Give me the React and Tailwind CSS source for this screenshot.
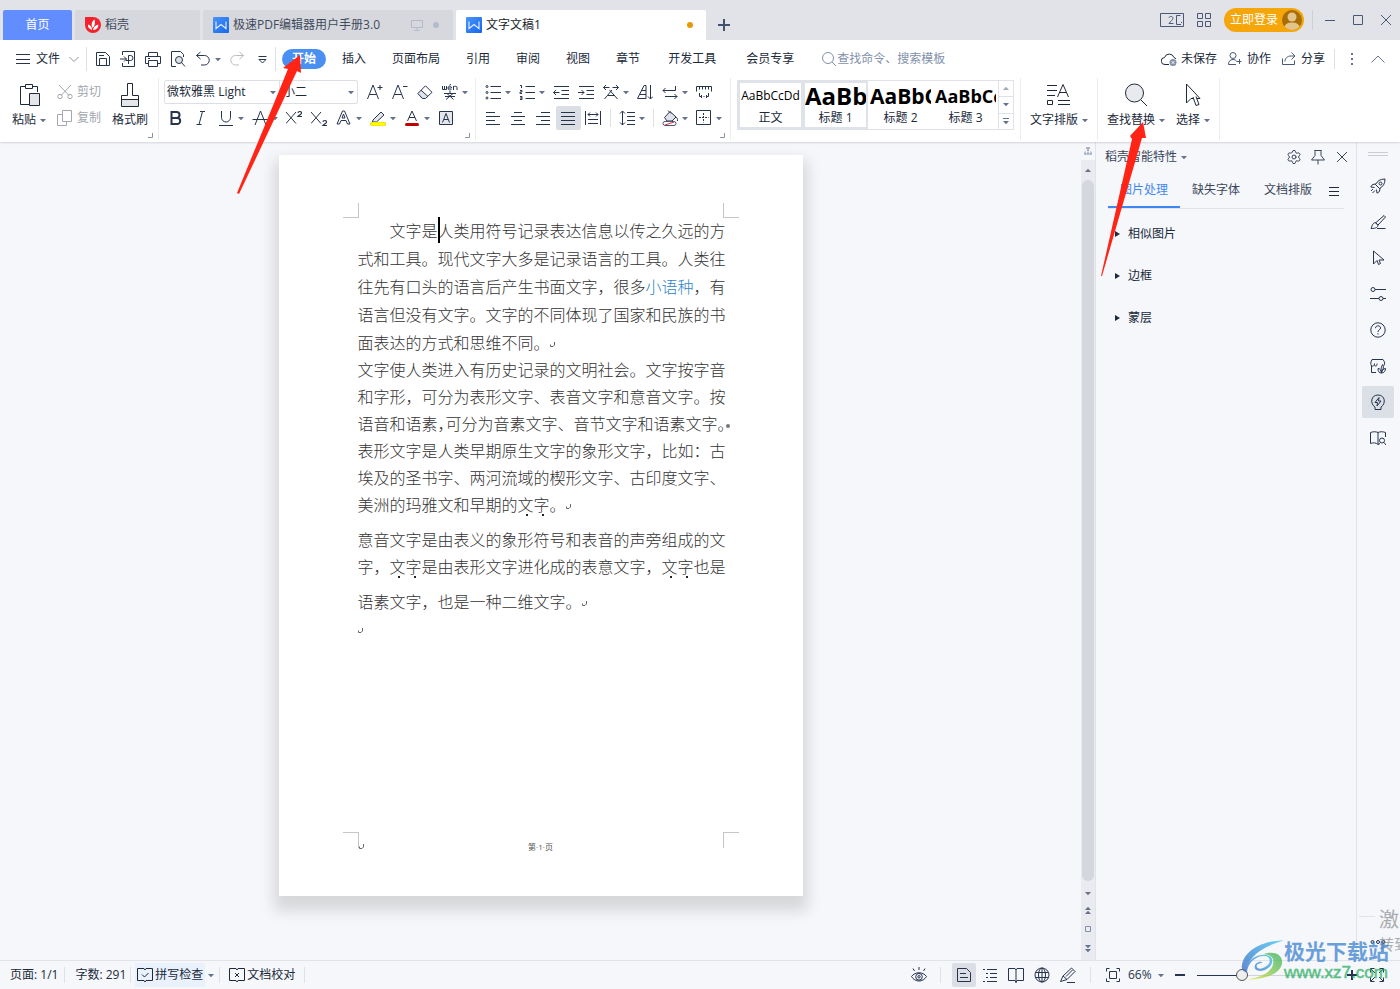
import { useState } from 'react';
import clsx from 'clsx';
import { Settings } from 'lucide-react';

// All the 16px line icons share the same frame, only the drawing changes
const Icon = ({ size = 16, className, children }) => (
    <svg
        width={size}
        height={size}
        viewBox={`0 0 ${size} ${size}`}
        fill="none"
        stroke="currentColor"
        strokeWidth="1"
        className={clsx('shrink-0', className)}
        aria-hidden="true"
    >
        {children}
    </svg>
);

const Caret = ({ className }) => (
    <svg width="6" height="3" viewBox="0 0 6 3" className={clsx('shrink-0 text-[#66728c]', className)} aria-hidden="true">
        <path d="M0 0h6L3 3.300z" fill="currentColor" />
    </svg>
);

const Divider = ({ className }) => <span className={clsx('w-px shrink-0 bg-[#dfe1e6]', className)} />;

const ToolButton = ({ label, caret, active, className, children }) => (
    <button
        aria-label={label}
        className={clsx(
            'flex h-6 shrink-0 items-center rounded-xs pl-1 text-[#27344d]',
            caret ? 'w-[34px]' : 'w-[25px]',
            active && 'bg-[#dbdfe5]',
            className
        )}
    >
        {children}
        {caret && <Caret className="ml-1" />}
    </button>
);

const WpsLogo = () => (
    <svg width="16" height="16" viewBox="0 0 16 16" className="shrink-0" aria-hidden="true">
        <defs>
            <linearGradient id="wps" x1="0" y1="0" x2="1" y2="1">
                <stop offset="0" stopColor="#4b93fb" />
                <stop offset="1" stopColor="#1668e8" />
            </linearGradient>
        </defs>
        <rect width="16" height="16" rx="1" fill="url(#wps)" />
        <path d="M3 4.500v7L8 7.500l5 4v-7" fill="none" stroke="#e8f1ff" strokeWidth="1.100" />
    </svg>
);

const DocerLogo = () => (
    <svg width="16" height="16" viewBox="0 0 16 16" className="shrink-0" aria-hidden="true">
        <path d="M0 0h8a8 8 0 0 1 0 16H8a8 8 0 0 1-8-8z" fill="#f5222d" />
        <path d="M7 13C4 12 2.500 10 3 7.500 5.500 8 7 10 7 13zM7.500 11C6 8 6.500 4.500 9.500 2.500 10.500 5.500 10 9 7.500 11zM8 13c.5-3 2.500-5 5.300-5.500C13.500 10.500 11.500 13 8 13z" fill="#fff" />
    </svg>
);

const TitleBar = () => (
    <header className="flex h-10 items-end bg-[#e1e3e8] pl-[3px] text-[#3f4a5c]">
        <nav className="flex gap-[3px]">
            <button className="h-[30px] w-[69px] rounded-t-xs bg-[#618dff] text-white">首页</button>
            <button className="flex h-[30px] w-[125px] items-center gap-1 rounded-t-xs bg-[#d6d8dd] pl-[10px]">
                <DocerLogo />
                稻壳
            </button>
            <button className="flex h-[30px] w-[250px] items-center gap-1 rounded-t-xs bg-[#d6d8dd] px-[10px]">
                <WpsLogo />
                极速PDF编辑器用户手册3.0
                <Icon className="ml-auto text-[#b3bac9]">
                    <path d="M2.500 3.500h11v7h-11zM8 10.500v3M5 13.500h6" />
                </Icon>
                <span className="mx-1 size-[6px] rounded-full bg-[#b3bacb]" />
            </button>
            <button className="flex h-[30px] w-[250px] items-center gap-1 rounded-t-xs bg-white px-[10px] text-[#20242c]">
                <WpsLogo />
                文字文稿1
                <span className="mr-[3px] ml-auto size-[6px] rounded-full bg-[#e79a00]" />
            </button>
        </nav>
        <button aria-label="新建" className="flex h-[30px] w-9 items-center justify-center text-[#44516c]">
            <Icon size={12}>
                <path d="M6 0v12M0 6h12" strokeWidth="2" />
            </Icon>
        </button>
        <div className="ml-auto flex h-full items-center text-[#4a5875]">
            <button aria-label="窗口" className="mr-3">
                <svg width="24" height="15" viewBox="0 0 24 15" fill="none" stroke="currentColor" aria-hidden="true">
                    <path d="M.5.500h23v13H.5zM20.500 2.500h-4v9h4.500M21.500 9v1" />
                    <path d="M9 4.800c.3-2 4-1.800 4 .4 0 1.500-2.500 3-4 5.300h4.500" />
                </svg>
            </button>
            <button aria-label="应用" className="mr-3">
                <Icon>
                    <path d="M1.500 1.500h5v5h-5zM9.500 1.500h5v5h-5zM1.500 9.500h5v5h-5zM9.500 9.500h5v5h-5z" />
                </Icon>
            </button>
            <button className="flex h-6 w-20 items-center gap-1 rounded-full bg-[#f5a60b] pl-[6px] text-white">
                立即登录
                <svg width="20" height="20" viewBox="0 0 20 20" aria-hidden="true">
                    <circle cx="10" cy="10" r="10" fill="#a86e05" />
                    <circle cx="10" cy="7" r="4.500" fill="#e3c58c" />
                    <path d="M2.500 16.500C4 13 7 12.500 10 12.500s6 .5 7.500 4a10 10 0 0 1-15 0z" fill="#e3c58c" />
                </svg>
            </button>
            <Divider className="mr-[9px] ml-2 h-5 !bg-[#cdd0d6]" />
            <button aria-label="最小化" className="mr-3 size-4">
                <Icon><path d="M3 8.500h10" /></Icon>
            </button>
            <button aria-label="最大化" className="mr-3 size-4">
                <Icon><path d="M3.500 3.500h9v9h-9z" /></Icon>
            </button>
            <button aria-label="关闭" className="mr-[6px] size-4">
                <Icon><path d="M3 3l10 10M13 3L3 13" /></Icon>
            </button>
        </div>
    </header>
);

const MENU = ['插入', '页面布局', '引用', '审阅', '视图', '章节'];
const MENU_EXTRA = ['开发工具', '会员专享'];

const MenuBar = () => (
    <div className="flex h-[38px] items-center bg-white text-[#20293a]">
        <button className="flex items-center gap-[5px] pl-[15px]">
            <Icon className="text-[#27344d]"><path d="M1 3.500h14M1 8.500h14M1 12.500h14" /></Icon>
            文件
            <Icon className="ml-[1px] text-[#8a93a6]"><path d="M3.500 6l4.500 4.500L12.500 6" /></Icon>
        </button>
        <Divider className="mx-1 h-6" />
        <ToolButton label="保存">
            <Icon><path d="M1.500 1.500h9l4 4v9h-13zM4.500 14V7.500h7V14M4 4.500h5" /></Icon>
        </ToolButton>
        <ToolButton label="输出为PDF">
            <Icon><path d="M2.500 4V.5h12v15h-12V12M0 8h6.500M4 5.500L6.500 8 4 10.500M8.500 13V4.500h2a2.200 2.200 0 0 1 0 5H6" /></Icon>
        </ToolButton>
        <ToolButton label="打印">
            <Icon><path d="M3.500 5V1.500h9V5M3.500 12.500h-3v-7h15v7h-3M3.500 9.500h9v6h-9zM3 7.500h2" /></Icon>
        </ToolButton>
        <ToolButton label="打印预览">
            <Icon>
                <path d="M6 15.500H1.500V.5h9l3 3V6" />
                <circle cx="9" cy="9" r="3.500" fill="#dfe2e8" />
                <path d="M11.500 11.500l3.500 4" />
            </Icon>
        </ToolButton>
        <ToolButton label="撤销" caret>
            <Icon><path d="M5.500 1L1.500 4.500l4 3.500M1.500 4.500h8a4.500 4.500 0 0 1 0 9.500H6" /></Icon>
        </ToolButton>
        <ToolButton label="恢复" className="!text-[#b8bcc4]">
            <Icon><path d="M10.500 1l4 3.500-4 3.500M14.500 4.500h-8a4.500 4.500 0 0 0 0 9.500H10" /></Icon>
        </ToolButton>
        <ToolButton label="自定义快速访问工具栏">
            <Icon><path d="M4.500 5.500h8M5 8.500h7l-3.500 3.500z" /></Icon>
        </ToolButton>
        <Divider className="mr-[6px] h-6" />
        <button className="h-5 rounded-full bg-[#4a8ff2] px-[10px] font-semibold text-white">开始</button>
        <nav className="ml-[3px] flex">
            {MENU.map((name) => (
                <button key={name} className="px-[13px]">{name}</button>
            ))}
            {MENU_EXTRA.map((name) => (
                <button key={name} className="px-[15px]">{name}</button>
            ))}
        </nav>
        <label className="ml-3 flex items-center text-[#8390ab]">
            <Icon>
                <circle cx="7" cy="7" r="5.500" />
                <path d="M11 11l4 4" />
            </Icon>
            <input
                aria-label="查找命令、搜索模板"
                placeholder="查找命令、搜索模板"
                className="w-32 bg-transparent outline-none placeholder:text-[#8390ab]"
            />
        </label>
        <div className="ml-auto flex items-center">
            <button className="flex items-center gap-1">
                <Icon>
                    <path d="M8 13.500H4a3.500 3.500 0 0 1-.5-7 5 5 0 0 1 9.500 0 3.500 3.500 0 0 1 2 1.500" />
                    <circle cx="12" cy="11.500" r="3.500" fill="#8390ab" stroke="none" />
                    <path d="M10.700 10.200l2.600 2.600M13.300 10.200l-2.600 2.600" stroke="#fff" />
                </Icon>
                未保存
            </button>
            <button className="ml-[10px] flex items-center gap-1 text-[#20293a]">
                <Icon className="text-[#4a5875]">
                    <circle cx="6" cy="4.500" r="3" />
                    <path d="M9 13.500H1.500c0-3 1.500-5 4.500-5 1.500 0 2.500.5 3.500 1.500M9.500 10.500h5M12.500 8v5" />
                </Icon>
                协作
            </button>
            <button className="ml-[10px] flex items-center gap-1">
                <Icon className="text-[#4a5875]">
                    <path d="M1.500 7.500v6h12v-4M4 10.500C4 7 6.500 5 10 5h3M10.500 1.500L14 5l-3.500 3.500" />
                </Icon>
                分享
            </button>
            <Divider className="mr-[9px] ml-[9px] h-5" />
            <button aria-label="更多" className="text-[#66728c]">
                <Icon>
                    <path d="M7 3h2M7 8h2M7 13h2" strokeWidth="2" />
                </Icon>
            </button>
            <button aria-label="收起功能区" className="mr-[14px] ml-[10px] text-[#66728c]">
                <Icon><path d="M1.500 11.500L8 5l6.500 6.500" /></Icon>
            </button>
        </div>
    </div>
);

const Launcher = () => (
    <button aria-label="更多设置" className="absolute right-[5px] bottom-1">
        <Icon size={5} className="text-[#8a93a6]"><path d="M4.500 0v4.500H0" /></Icon>
    </button>
);

const BigButton = ({ label, caret, icon }) => (
    <button className="flex flex-col items-center text-[#20293a]">
        <span className="flex h-[30px] items-center">{icon}</span>
        <span className="flex items-center gap-1 leading-5">
            {label}
            {caret && <Caret />}
        </span>
    </button>
);

const STYLES = [
    { name: '正文', preview: 'AaBbCcDd', font: 'text-xs justify-center' },
    { name: '标题 1', preview: 'AaBb', font: 'text-2xl font-bold' },
    { name: '标题 2', preview: 'AaBbC', font: 'text-[21px] font-bold' },
    { name: '标题 3', preview: 'AaBbCc', font: 'text-lg font-bold' }
];

const ClipboardGroup = () => (
    <section className="relative flex items-start gap-[11px] pr-[10px] pl-3">
        <BigButton
            label="粘贴"
            caret
            icon={
                <Icon size={24}>
                    <path d="M12 21.500H3.500v-18H8M16 3.500h4.500V9" />
                    <path d="M8.500 1.500h7v4h-7z" />
                    <path d="M12.500 10.500h10v12h-10z" fill="#e4e6ea" />
                </Icon>
            }
        />
        <div className="flex flex-col gap-[2px] text-[#a3a7af]">
            <button className="flex h-6 items-center gap-1">
                <Icon>
                    <path d="M2 1l10 10.500M14 1L4 11.500" />
                    <circle cx="3" cy="12.500" r="2.200" />
                    <circle cx="13" cy="12.500" r="2.200" />
                </Icon>
                剪切
            </button>
            <button className="flex h-6 items-center gap-1">
                <Icon><path d="M5.500.5h9v11h-9zM5 4.500H.5v11h9V12" /></Icon>
                复制
            </button>
        </div>
        <BigButton
            label="格式刷"
            icon={
                <Icon size={24}>
                    <path d="M3.500 16h17v7.500h-17z" fill="#e4e6ea" stroke="none" />
                    <path d="M3.500 23.500v-11h6v-12h5v12h6v11zM3.500 16.500h17" />
                </Icon>
            }
        />
        <Launcher />
    </section>
);

const FontGroup = () => (
    <section className="relative flex w-[316px] flex-col gap-[2px] pl-[5px]">
        <div className="flex">
            <div className="mr-[5px] flex h-6 w-[194px] rounded-xs border border-[#dcdfe5] text-[#20293a]">
                <label className="relative flex w-[115px] items-center border-r border-[#dcdfe5]">
                    <select aria-label="字体" className="w-full appearance-none bg-transparent pl-[2px] outline-none">
                        <option>微软雅黑 Light</option>
                    </select>
                    <Caret className="absolute right-[3px]" />
                </label>
                <label className="relative flex flex-1 items-center">
                    <select aria-label="字号" className="w-full appearance-none bg-transparent pl-[3px] outline-none">
                        <option>小二</option>
                    </select>
                    <Caret className="absolute right-[3px]" />
                </label>
            </div>
            <ToolButton label="增大字号">
                <Icon><path d="M.5 15L6 1l5.500 14M2.500 10.500h7M10.500 3.500h5M13 1v5" /></Icon>
            </ToolButton>
            <ToolButton label="减小字号">
                <Icon><path d="M.5 15L6 1l5.500 14M2.500 10.500h7M11 2.500h4.500" /></Icon>
            </ToolButton>
            <ToolButton label="清除格式">
                <Icon>
                    <path d="M4 6.500l6.500 6L7 14.500H4L.5 10z" fill="#dfe2e8" stroke="none" />
                    <path d="M.8 9.500L8.500 1.800l6.500 6.500-6.500 6.200h-3zM4 6.200l7 6.300" />
                </Icon>
            </ToolButton>
            <ToolButton label="拼音指南" caret>
                <Icon>
                    <path d="M.5 2v3.500h4V2M2.500 2v3.500M6 4h3.500c0-2.500-3.500-2.500-3.500 0s2.500 2 3.500 1.500M7.500 1L9 0M11.500 6V2M11.500 3c1-1.200 3.500-1 3.500.5V6" />
                    <path d="M8 7v2M2 9.500h12M5 9.500l6.500 6M11 9.500l-7 6M3 12.500h10" />
                </Icon>
            </ToolButton>
        </div>
        <div className="flex">
            <ToolButton label="加粗">
                <Icon><path d="M3.500 2h5a3 3 0 0 1 0 6h-5zM3.500 8h5.700a3 3 0 0 1 0 6H3.500z" strokeWidth="2" /></Icon>
            </ToolButton>
            <ToolButton label="倾斜">
                <Icon><path d="M7 1.500h5M3.500 14.500h5M9.500 1.500l-3.500 13" /></Icon>
            </ToolButton>
            <ToolButton label="下划线" caret>
                <Icon><path d="M3.500 1v6.500a4.500 4.500 0 0 0 9 0V1M1 15.500h14" /></Icon>
            </ToolButton>
            <ToolButton label="删除线" caret>
                <Icon><path d="M3 15L8.500 1 14 15M.5 9.500h15.500" /></Icon>
            </ToolButton>
            <ToolButton label="上标">
                <Icon>
                    <path d="M0 2l10 11.500M10 2L0 13.500" />
                    <path d="M12 3c0-2 3.500-2 3.500 0 0 1.200-2 2-3.500 3.500h4" strokeWidth="1.200" />
                </Icon>
            </ToolButton>
            <ToolButton label="下标">
                <Icon>
                    <path d="M0 2l10 11.500M10 2L0 13.500" />
                    <path d="M12 12c0-2 3.500-2 3.500 0 0 1.200-2 2-3.500 3.500h4" strokeWidth="1.200" />
                </Icon>
            </ToolButton>
            <ToolButton label="文字效果" caret>
                <Icon>
                    <path d="M1 14L6.500 1h2L14 14h-2.500l-1.500-3.500H5L3.500 14zM6 8l1.500-4L9 8z" />
                </Icon>
            </ToolButton>
            <ToolButton label="突出显示" caret>
                <Icon>
                    <path d="M3 10l8-8 3 3-7.500 7h-4z" fill="#e4e6ea" />
                    <rect x="0" y="12" width="16" height="4" rx="2" fill="#e3d800" stroke="none" />
                    <rect x="1" y="12.500" width="14" height="3" rx="1.500" fill="#ffff00" stroke="none" />
                </Icon>
            </ToolButton>
            <ToolButton label="字体颜色" caret>
                <Icon>
                    <path d="M3.500 11L8 1l4.500 10M5 7.500h6" />
                    <rect x="1" y="13" width="14" height="3" rx="1.500" fill="#c00000" stroke="none" />
                </Icon>
            </ToolButton>
            <ToolButton label="字符底纹">
                <Icon>
                    <path d="M1.500 1.500h13v13h-13z" fill="#e4e6ea" />
                    <path d="M4.500 12.500L8 3.500l3.500 9M6 9.500h4" />
                </Icon>
            </ToolButton>
        </div>
        <Launcher />
    </section>
);

const ParagraphGroup = () => (
    <section className="relative flex w-[254px] flex-col gap-[2px] pl-[5px]">
        <div className="flex">
            <ToolButton label="项目符号" caret>
                <Icon>
                    <path d="M5.500 2.500H16M5.500 8.500H16M5.500 14.500H16" />
                    <circle cx="2" cy="2.500" r="1" />
                    <circle cx="2" cy="8.500" r="1" />
                    <circle cx="2" cy="14" r="1" />
                </Icon>
            </ToolButton>
            <ToolButton label="编号" caret>
                <Icon>
                    <path d="M6.500 2.500H16M6.500 8.500H16M6.500 14.500H16M1 1.500h1.500V4M1 6.500h2v1.500H1v1.500h2M1 12.500h2v3H1M1 14h2" />
                </Icon>
            </ToolButton>
            <ToolButton label="减少缩进量">
                <Icon><path d="M1 2.500h15M8.500 6.500H16M8.500 10.500H16M1 14.500h15M6.500 8.500H.5M3 6L.5 8.500 3 11" /></Icon>
            </ToolButton>
            <ToolButton label="增加缩进量">
                <Icon><path d="M1 2.500h15M8.500 6.500H16M8.500 10.500H16M1 14.500h15M0 8.500h6M3.500 6L6 8.500 3.500 11" /></Icon>
            </ToolButton>
            <ToolButton label="中文版式" caret>
                <Icon><path d="M.5 3.500h6M3 1L.5 3.500 3 6M15.500 3.500h-6M13 1l2.500 2.500L13 6M1.500 15L9 6M14.500 15L6.500 6M5 11.500h6.500" /></Icon>
            </ToolButton>
            <ToolButton label="排序">
                <Icon><path d="M.5 14.500L7 1.500h2v13M3 10.500h6M5 6.500h4M.5 14.500H9M13.500 1v14M11 12.500l2.500 2.500 2.500-2.500" /></Icon>
            </ToolButton>
            <ToolButton label="显示段落标记" caret>
                <Icon><path d="M13.500 2v4.500H1M3.500 4L1 6.500 3.500 9M3 12.500h12M12.500 10l2.500 2.500-2.500 2.500" /></Icon>
            </ToolButton>
            <ToolButton label="制表位">
                <Icon><path d="M.5 7.500v-5h15v5M3.500 3v2.500M6.500 3v2.500M9.500 3v2.500M12.500 3v2.500M3.500 9v3.500h2M12.500 9v3.500h-2M7.500 12.500h1M5.500 11v3M10.500 11v3" /></Icon>
            </ToolButton>
        </div>
        <div className="flex items-center">
            <ToolButton label="左对齐">
                <Icon><path d="M1 2.500h9M1 6.500h14M1 10.500h9M1 14.500h14" /></Icon>
            </ToolButton>
            <ToolButton label="居中对齐">
                <Icon><path d="M4 2.500h8M1 6.500h14M4 10.500h8M1 14.500h14" /></Icon>
            </ToolButton>
            <ToolButton label="右对齐">
                <Icon><path d="M6 2.500h9M1 6.500h14M6 10.500h9M1 14.500h14" /></Icon>
            </ToolButton>
            <ToolButton label="两端对齐" active>
                <Icon><path d="M1 2.500h14M1 6.500h14M1 10.500h14M1 14.500h14" /></Icon>
            </ToolButton>
            <ToolButton label="分散对齐">
                <Icon><path d="M.5 1v14M15.500 1v14M3 4.500h10M5 2.500l-2 2 2 2M11 2.500l2 2-2 2M3 9.500h10M3 13.500h10" /></Icon>
            </ToolButton>
            <Divider className="mx-1 h-[18px]" />
            <ToolButton label="行距" caret>
                <Icon><path d="M3.500 1v14M1 3.500L3.500 1 6 3.500M1 12.500L3.500 15 6 12.500M8 2.500h8M8 6.500h8M8 10.500h8M8 14.500h8" /></Icon>
            </ToolButton>
            <Divider className="mx-1 h-[18px]" />
            <ToolButton label="底纹颜色" caret>
                <Icon>
                    <path d="M2.500 7.500L8 1.500l6 5.500-4 4H5z" fill="#dfe2e8" />
                    <path d="M6 .5l3 3M14 7c1.500 1 1.500 2 1.500 4" />
                    <rect x="1" y="11.500" width="13" height="4" rx="2" stroke="#4a5875" fill="#fff" />
                    <path d="M3 15l9-3" stroke="#e03030" />
                </Icon>
            </ToolButton>
            <ToolButton label="边框" caret>
                <Icon>
                    <path d="M.5.500h14v14H.5z" />
                    <path d="M7.500 3v9.500M3 7.500h9.500" strokeDasharray="2 1" />
                </Icon>
            </ToolButton>
        </div>
        <Launcher />
    </section>
);

const StyleGallery = () => (
    <section className="flex px-[6px]">
        <div className="flex h-[50px] w-[277px] border border-[#dfe2e8] text-black">
            {STYLES.map((style, i) => (
                <button
                    key={style.name}
                    className={clsx(
                        'flex w-[65px] flex-col overflow-hidden border-2',
                        i < 2 ? 'border-[#dfe2e8]' : 'border-transparent'
                    )}
                >
                    <span className={clsx('flex h-7 w-full items-center overflow-hidden leading-7 whitespace-nowrap', style.font)}>
                        {style.preview}
                    </span>
                    <span className="w-full text-center leading-[18px] text-[#20293a]">{style.name}</span>
                </button>
            ))}
            <div className="flex flex-1 flex-col divide-y divide-[#dfe2e8] border-l border-[#dfe2e8]">
                <button aria-label="上一行" className="flex flex-1 items-center justify-center">
                    <Caret className="rotate-180 opacity-60" />
                </button>
                <button aria-label="下一行" className="flex flex-1 items-center justify-center">
                    <Caret />
                </button>
                <button aria-label="全部样式" className="flex flex-1 flex-col items-center justify-center gap-[2px]">
                    <span className="h-px w-[6px] bg-[#66728c]" />
                    <Caret />
                </button>
            </div>
        </div>
    </section>
);

const Ribbon = () => (
    <div className="relative z-10 flex h-16 bg-white pt-[2px] shadow-[0_1px_2px_rgba(0,0,0,0.14)]">
        <ClipboardGroup />
        <Divider className="-mt-[2px] h-[62px] !bg-[#ebedf0]" />
        <FontGroup />
        <Divider className="-mt-[2px] h-[62px] !bg-[#ebedf0]" />
        <ParagraphGroup />
        <Divider className="-mt-[2px] h-[62px] !bg-[#ebedf0]" />
        <StyleGallery />
        <Divider className="-mt-[2px] h-[62px] !bg-[#ebedf0]" />
        <section className="flex items-start px-[9px]">
            <BigButton
                label="文字排版"
                caret
                icon={
                    <Icon size={24}>
                        <path d="M0 2.500h10M0 7.500h10M0 12.500h8M.5 17.500h5v4h-5zM11 17.500h12M11 21.500h12" />
                        <path d="M10.500 14L16 1.500 21.500 14M12.500 9.500h7" />
                    </Icon>
                }
            />
        </section>
        <Divider className="-mt-[2px] h-[62px] !bg-[#ebedf0]" />
        <section className="flex items-start gap-[11px] px-[9px]">
            <BigButton
                label="查找替换"
                caret
                icon={
                    <Icon size={24}>
                        <circle cx="10.500" cy="10" r="9" fill="#e8eaee" />
                        <path d="M17 17l6 6" />
                    </Icon>
                }
            />
            <BigButton
                label="选择"
                caret
                icon={
                    <Icon size={24}>
                        <path d="M5.500 1v19l4.500-4.500h9z" />
                        <path d="M12 14l3 8.500 3-1-3-8" fill="#fff" />
                    </Icon>
                }
            />
        </section>
        <Divider className="-mt-[2px] h-[62px] !bg-[#ebedf0]" />
    </div>
);

const ParagraphMark = ({ className }) => (
    <svg width="5" height="5" viewBox="0 0 5 5" fill="none" stroke="#666" className={clsx('inline-block', className)} aria-hidden="true">
        <path d="M4.500 0v3L3 4.500H.5V2.500" />
    </svg>
);

// 着重号: one dot under each character
const Dotted = ({ text }) =>
    text.split('').map((char, i) => (
        <span key={i} className="relative">
            {char}
            <span className="absolute bottom-0 left-1/2 size-[2px] bg-[#222]" />
        </span>
    ));

const Line = ({ children }) => <span className="block">{children}</span>;

// Punctuation that the justified line squeezes to half width
const Half = ({ children }) => <span className="[font-feature-settings:'halt']">{children}</span>;

const Page = () => (
    <article className="flex min-h-[741px] w-[524px] shrink-0 flex-col bg-white font-['Noto_Sans_CJK_SC',sans-serif] text-base font-light text-[#333] shadow-[0_10px_14px_5px_rgba(0,0,0,0.13)]">
        <div className="flex justify-between px-16 pt-12">
            <span className="h-[15px] w-4 border-r border-b border-[#c6c6c6]" />
            <span className="h-[15px] w-4 border-b border-l border-[#c6c6c6]" />
        </div>
        <div className="-mt-[2px] pl-[79px] whitespace-nowrap">
            <p className="leading-7">
                <Line>
                    <span className="pl-8">文字是</span>
                    <span className="relative">
                        <span className="absolute -top-px left-0 h-[26px] w-[2px] bg-black" />
                        人类用符号记录表达信息以传之久远的方
                    </span>
                </Line>
                <Line>式和工具。现代文字大多是记录语言的工具。人类往</Line>
                <Line>
                    往先有口头的语言后产生书面文字，很多<span className="text-[#2e83c9]">小语种</span>，有
                </Line>
                <Line>语言但没有文字。文字的不同体现了国家和民族的书</Line>
                <Line>面表达的方式和思维不同。<ParagraphMark /></Line>
            </p>
            <p className="leading-[27px]">
                <Line>文字使人类进入有历史记录的文明社会。文字按字音</Line>
                <Line>和字形，可分为表形文字、表音文字和意音文字。按</Line>
                <Line>
                    语音和语素<Half>，</Half>可分为音素文字、音节文字和语素文字<Half>。</Half>
                    <span className="inline-block size-1 rounded-full bg-[#777] align-middle" />
                </Line>
                <Line>表形文字是人类早期原生文字的象形文字，比如：古</Line>
                <Line>埃及的圣书字、两河流域的楔形文字、古印度文字、</Line>
                <Line>美洲的玛雅文和早期的<Dotted text="文字" />。<ParagraphMark /></Line>
            </p>
            <p className="mt-2 leading-[27px]">
                <Line>意音文字是由表义的象形符号和表音的声旁组成的文</Line>
                <Line>字，<Dotted text="文字" />是由表形文字进化成的表意文字，<Dotted text="文字" />也是</Line>
            </p>
            <p className="mt-2 leading-[27px]">语素文字，也是一种二维文字。<ParagraphMark /></p>
            <p className="leading-[27px]"><ParagraphMark /></p>
        </div>
        <footer className="mt-auto flex items-start justify-between px-16 pb-[34px] text-[8px]">
            <span className="h-4 w-4 border-t border-r border-[#c6c6c6]">
                <ParagraphMark className="mt-[11px] ml-4" />
            </span>
            <span className="font-['Open_Sans','Noto_Sans_CJK_SC',sans-serif] font-normal leading-[30px] text-[#555]">第·1·页</span>
            <span className="h-4 w-4 border-t border-l border-[#c6c6c6]" />
        </footer>
    </article>
);

const ScrollBar = () => (
    <div className="flex w-[14px] shrink-0 flex-col items-center bg-[#e9ebf0] text-[#8390ab]">
        <div className="flex h-[18px] w-full items-center justify-center bg-[#f5f7fa]">
            <Icon size={8} className="text-[#a9b2c6]">
                <path d="M2 1h4M4 1v3" strokeWidth="2" />
                <path d="M0 7h8M1 7V4.500M4 7V4.500M7 7V4.500" strokeWidth="1.500" />
            </Icon>
        </div>
        <button aria-label="向上滚动" className="flex h-5 items-center"><Caret className="rotate-180" /></button>
        <div className="w-3 flex-1 rounded-full bg-[#d4d7de]" />
        <button aria-label="向下滚动" className="flex h-6 items-center"><Caret /></button>
        <button aria-label="上一页" className="flex h-[10px] flex-col items-center justify-center gap-px">
            <Caret className="rotate-180" />
            <Caret className="rotate-180" />
        </button>
        <button aria-label="选择浏览对象" className="flex h-7 items-center"><Icon size={6}><path d="M.5.500h5v5h-5z" /></Icon></button>
        <button aria-label="下一页" className="mb-[7px] flex h-[10px] flex-col items-center justify-center gap-px">
            <Caret />
            <Caret />
        </button>
    </div>
);

const PANEL_TABS = ['图片处理', '缺失字体', '文档排版'];
const PANEL_ITEMS = ['相似图片', '边框', '蒙层'];

const SmartPanel = () => {
    const [tab, setTab] = useState(PANEL_TABS[0]);

    return (
        <aside className="flex w-[262px] shrink-0 flex-col border-x border-[#e1e3e8] text-[#3a4559]">
            <div className="flex h-[30px] items-center pr-[6px] pl-[9px]">
                <button className="flex items-center gap-1">
                    稻壳智能特性
                    <Caret />
                </button>
                <div className="ml-auto flex gap-2">
                    <button aria-label="设置">
                        <Settings size={16} strokeWidth={1.5} />
                    </button>
                    <button aria-label="固定">
                        <Icon><path d="M4.500 1.500h7l-.5 1v4l3.500 4.500h-13L5 6.500v-4zM8 11v4.500" /></Icon>
                    </button>
                    <button aria-label="关闭面板">
                        <Icon><path d="M3 3l10 10M13 3L3 13" /></Icon>
                    </button>
                </div>
            </div>
            <div className="mx-3 mt-[2px] flex h-[35px] items-center border-b border-[#e1e3e8]">
                {PANEL_TABS.map((name) => (
                    <button
                        key={name}
                        onClick={() => setTab(name)}
                        className={clsx(
                            'h-[34px] w-[72px] border-b-2',
                            tab === name ? 'border-[#3f87f0] text-[#3f87f0]' : 'border-transparent'
                        )}
                    >
                        {name}
                    </button>
                ))}
                <button aria-label="更多" className="ml-[2px] text-[#20293a]">
                    <Icon><path d="M3 4.500h10M3 8.500h10M3 12.500h10" /></Icon>
                </button>
            </div>
            <ul className="mt-1 pl-[19px] text-[#20293a]">
                {PANEL_ITEMS.map((name) => (
                    <li key={name}>
                        <button className="flex h-[42px] items-center gap-2">
                            <svg width="5" height="6" viewBox="0 0 5 6" aria-hidden="true">
                                <path d="M0 0l5 3-5 3z" fill="currentColor" />
                            </svg>
                            {name}
                        </button>
                    </li>
                ))}
            </ul>
        </aside>
    );
};

const SIDE_TOOLS = [
    {
        label: '快捷',
        icon: (
            <>
                <path d="M15 1C10 1 7.500 3 5.500 6.500l4 4C13 8.500 15 6 15 1zM6 6L2.500 6.500.8 9l3.700.5M10 10l-.5 3.500L7 15.200 6.500 11.500M3 11l-2 2M5 12.500l-2.500 2.500" />
                <circle cx="10.500" cy="5.500" r="1.500" />
            </>
        )
    },
    {
        label: '样式和格式',
        icon: <path d="M14 1.500L15.500 3 8 11 5.500 9zM5.500 8.500L8 11c0 2-1.500 3.500-7 3.500C2 13 2 9 5.500 8.500zM7 14.500h8.500" />
    },
    { label: '选择', icon: <path d="M3.500 1v13l3.500-3.500 1.500 4 2-1-1.500-3.500h5z" /> },
    {
        label: '属性',
        icon: (
            <>
                <path d="M5 3.500h11M0 12.500h9M13 12.500h3" />
                <circle cx="3" cy="3.500" r="2" />
                <circle cx="11" cy="12.500" r="2" />
            </>
        )
    },
    {
        label: '帮助',
        icon: (
            <>
                <circle cx="8" cy="8" r="7.200" />
                <path d="M5.500 6.200C5.500 3 10.500 3 10.500 6 10.500 8 8 7.500 8 10M8 11.200v1.300" />
            </>
        )
    },
    {
        label: '稻壳资源',
        icon: (
            <>
                <path d="M6 14.500H1.500V8C.5 6.500.5 4 2 1.500h11C15 4 15 6 14 7.500M1.500 8C3 8.500 4.500 8 4.500 6v-.5M4.500 7.500c1 1 2.500.5 2.500-1V5.500" />
                <path d="M8 10.500c2 0 3 1.500 3.500 4.500C9 15 8 13.500 8 10.500zM11.500 14c-.8-3-.3-5.500 1.200-7.500 1.300 2 .8 5-1.200 7.500zM11.500 15c0-2.500 2-4.500 4-4.500 0 2.500-1.500 4.500-4 4.500z" />
            </>
        )
    },
    {
        label: '智能特性',
        active: true,
        icon: <path d="M5 13C0 10 .5 1 8 1s8 9 3 12v2.500H5zM9 3.500L5 8.500h2.500L7 12l4-5H8.500z" />
    },
    {
        label: '查找文档',
        icon: (
            <>
                <path d="M8 2.500C6 1.500 3 1.500.5 2.500v11c2.500-1 5.500-1 7.500 1V2.500c2-1 5-1 7.500 0V7M8 14.500l2-1" />
                <circle cx="12" cy="10.500" r="2.500" />
                <path d="M14 12.500l2 2.500" />
            </>
        )
    }
];

const SideBar = () => (
    <aside className="flex w-[43px] shrink-0 flex-col items-start overflow-hidden pl-[5px] text-[#27344d]">
        <span className="mt-[10px] mb-[14px] ml-[6px] h-1 w-5 border-y border-[#c9ccd2]" />
        <div className="flex flex-col gap-1">
            {SIDE_TOOLS.map((tool) => (
                <button
                    key={tool.label}
                    aria-label={tool.label}
                    className={clsx('flex size-8 items-center justify-center rounded-xs', tool.active && 'bg-[#dbdfe6]')}
                >
                    <Icon>{tool.icon}</Icon>
                </button>
            ))}
        </div>
        <div className="relative mt-auto -ml-[3px] w-full pb-1 pl-5 whitespace-nowrap text-[#a9abaf]">
            <span className="absolute top-2 left-0 w-4 border-t border-[#e1e3e8]" />
            <p className="text-xl leading-6">激</p>
            <p className="text-[15px] leading-6">转到</p>
            <button aria-label="更多工具" className="absolute bottom-[10px] left-[11px] text-[#27344d]">
                <Icon>
                    <circle cx="2.500" cy="8" r="1.500" />
                    <circle cx="8" cy="8" r="1.500" />
                    <circle cx="13.500" cy="8" r="1.500" />
                </Icon>
            </button>
        </div>
    </aside>
);

const VIEWS = [
    { label: '页面视图', active: true, icon: <path d="M1.500 1.500h9l4 4v9h-13zM4 6.500h6M4 10.500h8" /> },
    { label: '大纲', icon: <path d="M1 2.500h2M5 2.500h10M4 6.500h2M8 6.500h7M4 10.500h2M8 10.500h7M1 14.500h2M5 14.500h10" /> },
    { label: '阅读版式', icon: <path d="M8 3v12.500M.5 1.500H7l1 1.500 1-1.500h6.500v12H9l-1 2-1-2H.5z" /> },
    {
        label: 'Web版式',
        icon: (
            <>
                <circle cx="8" cy="8" r="7" />
                <ellipse cx="8" cy="8" rx="3.500" ry="7" />
                <path d="M1.500 5.500h13M1.500 10.500h13M8 1v14" />
            </>
        )
    },
    { label: '写作模式', icon: <path d="M.5 14.500L3 9l8.500-8 3.500 3.500-8 8zM3 9l4 3.500M6 9.500L12.500 3M7 15.500h8" /> }
];

const StatusBar = () => {
    const [zoom, setZoom] = useState(66);

    return (
        <footer className="flex h-[29px] shrink-0 items-center border-t border-[#e1e3e8] bg-[#f5f7fa] text-[#20293a]">
            <button className="pl-[10px]">页面: 1/1</button>
            <Divider className="mr-[10px] ml-[6px] h-4" />
            <button>字数: 291</button>
            <Divider className="mx-1 h-4" />
            <button className="flex h-6 items-center gap-[2px] bg-[#e8f1fc] px-[2px]">
                <Icon><path d="M.5 1.500H7l1 1.500 1-1.500h6.500v12H9l-1 1.500-1-1.500H.5zM5 7.500l2.500 2.500L11.500 6" /></Icon>
                拼写检查
            </button>
            <Caret className="mx-[3px]" />
            <Divider className="mr-[9px] ml-[2px] h-4" />
            <button className="flex items-center gap-[2px]">
                <Icon><path d="M.5 1.500H7l1 1.500 1-1.500h6.500v12H9l-1 1.500-1-1.500H.5zM6 6l4 4M10 6l-4 4" /></Icon>
                文档校对
            </button>
            <Divider className="ml-[9px] h-4" />

            <div className="ml-auto flex items-center text-[#27344d]">
                <button aria-label="护眼模式">
                    <Icon>
                        <path d="M.5 9.500C4 4.500 12 4.500 15.500 9.500 12 15.500 4 15.500.5 9.500zM8 0v3M2 1.500l1.500 2.500M14 1.500L12.500 4" />
                        <circle cx="8" cy="9.800" r="3.300" />
                        <circle cx="8" cy="9.800" r="1.200" />
                    </Icon>
                </button>
                <Divider className="mr-[11px] ml-[13px] h-4" />
                <div className="flex gap-[2px]">
                    {VIEWS.map((view) => (
                        <button
                            key={view.label}
                            aria-label={view.label}
                            className={clsx('flex size-6 items-center justify-center rounded-xs', view.active && 'bg-[#dbdfe5]')}
                        >
                            <Icon>{view.icon}</Icon>
                        </button>
                    ))}
                </div>
                <Divider className="mr-[14px] ml-[10px] h-4" />
                <button aria-label="适合页面">
                    <Icon><path d="M4.500 1.500h-3v3M11.500 1.500h3v3M4.500 14.500h-3v-3M11.500 14.500h3v-3M4.500 4.500h7v7h-7z" /></Icon>
                </button>
                <button className="ml-[7px] flex w-9 items-center justify-between">
                    {zoom}%
                    <Caret />
                </button>
                <button aria-label="缩小" onClick={() => setZoom(zoom - 1)} className="ml-2">
                    <Icon><path d="M3 8h10" strokeWidth="2" /></Icon>
                </button>
                <input
                    type="range"
                    aria-label="显示比例"
                    min="10"
                    max="190"
                    value={zoom}
                    onChange={(e) => setZoom(Number(e.target.value))}
                    className="mx-[9px] h-[13px] w-[138px] appearance-none bg-linear-to-r from-[#27344d] from-31% to-[#cfd3da] to-31% bg-size-[100%_1px] bg-center bg-no-repeat [&::-webkit-slider-thumb]:size-3 [&::-webkit-slider-thumb]:appearance-none [&::-webkit-slider-thumb]:rounded-full [&::-webkit-slider-thumb]:border [&::-webkit-slider-thumb]:border-[#555] [&::-webkit-slider-thumb]:bg-[#eee]"
                />
                <button aria-label="放大" onClick={() => setZoom(zoom + 1)}>
                    <Icon><path d="M3 8h10M8 3v10" strokeWidth="2" /></Icon>
                </button>
                <button aria-label="全屏显示" className="mr-[15px] ml-[9px]">
                    <Icon><path d="M1.500 5.500v-4h4M10.500 1.500h4v4M14.500 10.500v4h-4M5.500 14.500h-4v-4M2 2l4 4M14 2l-4 4M14 14l-4-4M2 14l4-4" /></Icon>
                </button>
            </div>
        </footer>
    );
};

const Watermark = () => (
    <div className="pointer-events-none absolute right-[11px] bottom-[6px] flex items-center opacity-75">
        <svg width="43" height="42" viewBox="0 0 44 42" aria-hidden="true">
            <defs>
                <linearGradient id="swirlBlue" x1="0" y1="1" x2="1" y2="0">
                    <stop offset="0" stopColor="#2f63c4" />
                    <stop offset="1" stopColor="#38c3f0" />
                </linearGradient>
                <linearGradient id="swirlGreen" x1="0" y1="1" x2="1" y2="0">
                    <stop offset="0" stopColor="#f4e23c" />
                    <stop offset="0.500" stopColor="#7dc84f" />
                    <stop offset="1" stopColor="#2fae5c" />
                </linearGradient>
            </defs>
            <path d="M44 0C24 0 4 9 1 25c-1 4 1 7 5 8C5 20 18 7 44 0z" fill="url(#swirlBlue)" />
            <path d="M6 33c1-11 10-18 19-17 6 1 6 8 0 11-4 3-9 2-9-1 0-2 3-3 6-3-2-3-8 0-8 4 0 5 8 6 14 1 6-5 5-12-1-13C17 13 4 20 6 33z" fill="url(#swirlBlue)" />
            <path d="M23 14c10-4 20 0 19 9-1 10-15 17-36 17 15-2 26-8 27-17 1-6-4-9-10-9z" fill="url(#swirlGreen)" />
        </svg>
        <div className="whitespace-nowrap">
            <p className="text-[21px] leading-6 font-bold text-[#3b82d0]">极光下载站</p>
            <p className="font-['Liberation_Sans',sans-serif] text-[17px] leading-5 text-[#27ae60] [-webkit-text-stroke:0.500px_#27ae60]">www.xz7.com</p>
        </div>
    </div>
);

const Arrows = () => (
    <svg className="pointer-events-none absolute inset-0 z-20 size-full" fill="#ff2416" aria-hidden="true">
        <path d="M237 193L288 69 283 68 300 55 301 73 297 71 239 194z" />
        <path d="M1101 276L1132 139 1130 136 1143 122 1146 138 1142 138 1102 276z" />
    </svg>
);

export default function App() {
    return (
        <div className="relative flex h-screen flex-col overflow-hidden bg-[#f5f7fa] font-['Open_Sans','Noto_Sans_CJK_SC',sans-serif] text-xs whitespace-nowrap">
            <TitleBar />
            <MenuBar />
            <Ribbon />
            <main className="flex min-h-0 flex-1">
                <div className="flex min-w-0 flex-1 items-start justify-center overflow-hidden pt-[13px]">
                    <Page />
                </div>
                <ScrollBar />
                <SmartPanel />
                <SideBar />
            </main>
            <StatusBar />
            <Watermark />
            <Arrows />
        </div>
    );
}
